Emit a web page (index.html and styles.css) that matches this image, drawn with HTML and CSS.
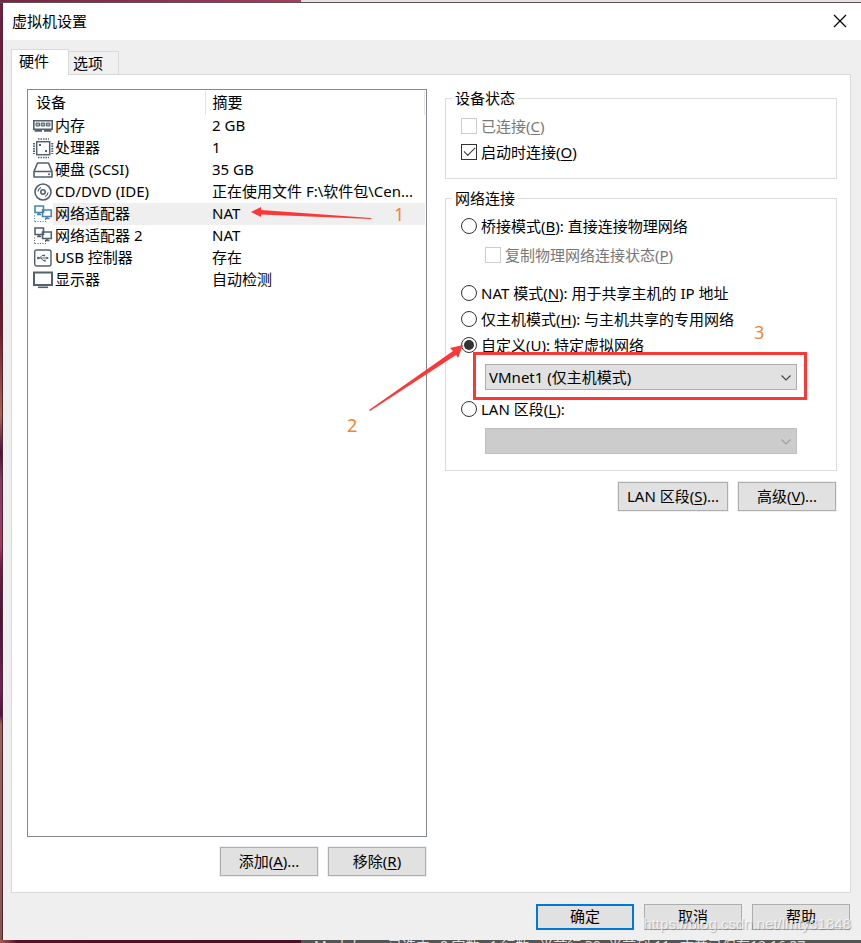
FILE: index.html
```html
<!DOCTYPE html>
<html lang="zh-CN">
<head>
<meta charset="utf-8">
<meta name="viewport" content="width=device-width, initial-scale=1">
<title>虚拟机设置</title>
<link rel="stylesheet" href="styles.css">
</head>
<body>
<div class="desktop-top"></div>
<div class="desktop">
  <div class="wallpaper"></div>
  <main class="dialog">
    <header class="titlebar">
      <h1>虚拟机设置</h1>
      <button class="close" type="button" aria-label="关闭">
        <svg width="14" height="14" viewBox="0 0 14 14"><path d="M1 1L13 13M13 1L1 13" fill="none" stroke="#000" stroke-width="1.2"/></svg>
      </button>
    </header>
    <div class="tabs" role="tablist">
      <button class="tab active" type="button" role="tab" aria-selected="true">硬件</button>
      <button class="tab" type="button" role="tab" aria-selected="false">选项</button>
    </div>
    <div class="panel">
      <section class="devices">
        <div class="list">
          <table>
            <thead><tr><th class="name">设备</th><th>摘要</th></tr></thead>
            <tbody>
              <tr><td><div class="device"><svg class="icon" viewBox="0 0 20 18"><path d="M.8 3.800H19.200V12.200H.8Z" fill="#fff" stroke="currentColor" stroke-width="1.600"/><path d="M3 6H6.500V9H3ZM8.200 6H11.700V9H8.200ZM13.400 6H16.900V9H13.400Z" fill="#aab3ba" stroke="currentColor"/><path d="M1.500 13.800H9M11 13.800H18.500" stroke="currentColor" stroke-width="2"/></svg><span>内存</span></div></td><td>2 GB</td></tr>
              <tr><td><div class="device"><svg class="icon" viewBox="0 0 20 18"><rect x="3.700" y="2.700" width="13" height="13" fill="#fff" stroke="currentColor" stroke-width="1.500"/><path d="M5 0H16M5 18.500H16" stroke="currentColor" stroke-width="1.600" stroke-dasharray="1.500 1"/><path d="M1 4V15M19.300 4V15" stroke="currentColor" stroke-width="2" stroke-dasharray="1.500 1"/><path d="M6 5h2v2H6zM12 11h2v2h-2z" fill="currentColor"/></svg><span>处理器</span></div></td><td>1</td></tr>
              <tr><td><div class="device"><svg class="icon" viewBox="0 0 20 18"><path d="M4.500 2H15.500L19 10.500V16H1V10.500ZM1 10.500H19" fill="#fff" stroke="currentColor" stroke-width="1.600" stroke-linejoin="round"/><circle cx="16" cy="13.300" r="1" fill="currentColor"/></svg><span>硬盘 (SCSI)</span></div></td><td>35 GB</td></tr>
              <tr><td><div class="device"><svg class="icon" viewBox="0 0 20 18"><circle cx="10" cy="9" r="8" fill="#fff" stroke="currentColor" stroke-width="1.600"/><circle cx="10" cy="9" r="2.200" fill="none" stroke="currentColor" stroke-width="1.600"/><path d="M5 8.500A5 5 0 0 1 8 4.500M15 9.500A5 5 0 0 1 12 13.500" fill="none" stroke="currentColor" stroke-width="1.300"/></svg><span>CD/DVD (IDE)</span></div></td><td>正在使用文件 F:\软件包\Cen...</td></tr>
              <tr class="selected"><td><div class="device"><svg class="icon" viewBox="0 0 20 18"><path d="M2 1H10.500V7.500H2ZM4 9.500H8M6 7.500V9.500M9.500 5H18.300V11.500H9.500ZM12 13.500H16.500M14 11.500V13.500" fill="#fff" stroke="currentColor" stroke-width="1.600"/><path d="M1.500 10.500V17M2 16.500H13M12.500 14V17" fill="none" stroke="currentColor" stroke-dasharray="1 1.500"/></svg><span>网络适配器</span></div></td><td>NAT</td></tr>
              <tr><td><div class="device"><svg class="icon" viewBox="0 0 20 18"><path d="M2 1H10.500V7.500H2ZM4 9.500H8M6 7.500V9.500M9.500 5H18.300V11.500H9.500ZM12 13.500H16.500M14 11.500V13.500" fill="#fff" stroke="currentColor" stroke-width="1.600"/><path d="M1.500 10.500V17M2 16.500H13M12.500 14V17" fill="none" stroke="currentColor" stroke-dasharray="1 1.500"/></svg><span>网络适配器 2</span></div></td><td>NAT</td></tr>
              <tr><td><div class="device"><svg class="icon" viewBox="0 0 20 18"><rect x="1.700" y="1" width="16.300" height="16" rx="2" fill="#fff" stroke="currentColor" stroke-width="1.400"/><path d="M4 9H15M6.500 9L9 6.500H11M8 9L10 11.500H12" fill="none" stroke="currentColor" stroke-width="1"/><circle cx="5.300" cy="9" r="1.300" fill="currentColor"/><path d="M13.500 7.400L16 9L13.500 10.600Z" fill="currentColor"/><circle cx="11.300" cy="6.500" r=".9" fill="currentColor"/><path d="M11 10.700h1.800v1.800H11z" fill="currentColor"/></svg><span>USB 控制器</span></div></td><td>存在</td></tr>
              <tr><td><div class="device"><svg class="icon" viewBox="0 0 20 18"><rect x="1" y="1.500" width="18" height="12.500" fill="#fff" stroke="currentColor" stroke-width="2"/><path d="M5 16.300H15" stroke="currentColor" stroke-width="1.600"/></svg><span>显示器</span></div></td><td>自动检测</td></tr>
            </tbody>
          </table>
        </div>
        <div class="actions">
          <button class="btn" type="button">添加(<u>A</u>)...</button>
          <button class="btn" type="button">移除(<u>R</u>)</button>
        </div>
      </section>
      <section class="settings">
        <fieldset>
          <legend>设备状态</legend>
          <label class="option disabled"><input type="checkbox" disabled><span>已连接(<u>C</u>)</span></label>
          <label class="option"><input type="checkbox" checked><span>启动时连接(<u>O</u>)</span></label>
        </fieldset>
        <fieldset class="network">
          <legend>网络连接</legend>
          <label class="option"><input type="radio" name="mode"><span>桥接模式(<u>B</u>): 直接连接物理网络</span></label>
          <label class="option nested disabled"><input type="checkbox" disabled><span>复制物理网络连接状态(<u>P</u>)</span></label>
          <label class="option"><input type="radio" name="mode"><span>NAT 模式(<u>N</u>): 用于共享主机的 IP 地址</span></label>
          <label class="option"><input type="radio" name="mode"><span>仅主机模式(<u>H</u>): 与主机共享的专用网络</span></label>
          <label class="option"><input type="radio" name="mode" checked><span>自定义(<u>U</u>): 特定虚拟网络</span></label>
          <div class="combo marked">
            <select aria-label="特定虚拟网络"><option>VMnet1 (仅主机模式)</option></select>
            <svg class="chevron" width="10" height="6" viewBox="0 0 10 6"><path d="M.5 .5L5 5L9.500 .5" fill="none" stroke="currentColor" stroke-width="1.200"/></svg>
          </div>
          <label class="option"><input type="radio" name="mode"><span>LAN 区段(<u>L</u>):</span></label>
          <div class="combo off">
            <select aria-label="LAN 区段" disabled><option></option></select>
            <svg class="chevron" width="10" height="6" viewBox="0 0 10 6"><path d="M.5 .5L5 5L9.500 .5" fill="none" stroke="currentColor" stroke-width="1.200"/></svg>
          </div>
        </fieldset>
        <div class="actions">
          <button class="btn wide" type="button">LAN 区段(<u>S</u>)...</button>
          <button class="btn" type="button">高级(<u>V</u>)...</button>
        </div>
      </section>
    </div>
    <footer>
      <button class="btn primary" type="button">确定</button>
      <button class="btn" type="button">取消</button>
      <button class="btn" type="button">帮助</button>
    </footer>
  </main>
</div>
<div class="statusbar"><span>Markdown 已选中</span><span>8 字数</span><span>1 行数</span><span>当前行 39, 当前列 11</span><span>文章已保存12:16:37</span></div>
<svg class="arrows" width="861" height="943" viewBox="0 0 861 943" aria-hidden="true">
  <path d="M251 212L261 207V210L371 218V219L261 214.500V217Z" fill="#fb3838"/>
  <path d="M463 345L450 348L453 351L369 410L370 411L456 355L458 358Z" fill="#fb3838"/>
</svg>
<span class="step one">1</span>
<span class="step two">2</span>
<span class="step three">3</span>
<span class="watermark">https://blog.csdn.net/lmty31848</span>
</body>
</html>
```
FILE: styles.css
```css
* { box-sizing: border-box; }
body {
  margin: 0;
  position: relative;
  min-height: 100vh;
  display: flex;
  flex-direction: column;
  overflow-x: hidden;
  background: #efefef;
  color: #000;
  font: 15px/20px "Noto Sans", "Noto Sans CJK SC", sans-serif;
}
button, select { font: inherit; color: inherit; }
u { text-underline-offset: 2px; text-decoration-thickness: 1px; text-decoration-skip-ink: none; }
.desktop-top {
  height: 3px;
  background: linear-gradient(90deg, #7a2345, #a83c5b 35%, #e3e3e3 35%);
  border-bottom: 1px solid #5e5156;
}
.desktop { flex: 1; display: flex; }
.wallpaper {
  width: 3px;
  border-right: 1px solid #4a2b35;
  background: linear-gradient(#7a1d42, #660d35 30%, #7a1928 35%, #b06050 44%, #50103c 48%, #8b3865 51%, #a83760 58%, #761744 60%, #501038 66%, #781c58 73%, #591044 76%, #a16056 77%, #8c5350);
}
.dialog { flex: 1; min-width: 0; display: flex; flex-direction: column; }
.titlebar {
  height: 37px;
  padding: 0 14px 2px 9px;
  display: flex;
  align-items: center;
  justify-content: space-between;
  background: #fff;
}
h1 { margin: 0; font-size: 15px; font-weight: 400; }
.close { padding: 0; border: 0; background: none; display: flex; }
.tabs { display: flex; align-items: flex-end; padding: 9px 8px 0; }
.tab {
  height: 23px;
  width: 50px;
  padding: 0 0 0 4px;
  text-align: left;
  border: 1px solid #d9d9d9;
  border-width: 1px 1px 0 0;
  background: #f0f0f0;
}
.tab.active {
  width: 58px;
  height: 26px;
  margin-bottom: -1px;
  padding: 0 0 3px 7px;
  border-left-width: 1px;
  background: #fff;
  position: relative;
}
.panel {
  flex: 1;
  margin: 0 10px 0 8px;
  padding: 14px 13px 16px 15px;
  display: grid;
  grid-template-columns: 400fr 392fr;
  gap: 18px;
  border: 1px solid #d9d9d9;
  background: #fff;
}
.devices { display: flex; flex-direction: column; gap: 10px; min-width: 0; }
.list { flex: 1; border: 1px solid #828790; padding: 1px; }
table { width: 100%; table-layout: fixed; border-collapse: collapse; }
th, td { padding: 0 0 2px 7px; height: 22px; line-height: 20px; font-weight: 400; text-align: left; white-space: nowrap; }
th { height: 24px; line-height: 22px; border-right: 1px solid #e5e5e5; }
th.name { width: 176px; }
td:first-child { padding: 0 0 0 4px; }
.device { display: flex; align-items: center; height: 22px; }
.device span { flex: 1; padding-left: 2px; height: 22px; }
.icon { width: 20px; height: 18px; color: #52626f; overflow: visible; }
.selected td:last-child, .selected .device span { background: #efefef; }
.selected .icon { color: #4784ac; }
.actions { display: flex; justify-content: flex-end; gap: 10px; padding-right: 1px; }
.btn {
  width: 98px;
  height: 29px;
  padding: 0 0 2px;
  border: 1px solid #adadad;
  background: #e1e1e1;
  box-shadow: 0 0 0 1px #f0f0f0;
}
.btn.wide { width: 110px; }
.btn.primary { border: 2px solid #0078d7; }
fieldset { min-width: 0; margin: 0 0 10px; padding: 6px 39px 13px 15px; border: 1px solid #dcdcdc; }
legend { margin-left: -9px; padding: 0 3px; line-height: 18px; }
.network { padding-bottom: 16px; margin-bottom: 11px; }
.option { display: flex; align-items: center; gap: 4px; height: 26px; white-space: nowrap; }
.option.nested { margin: 3px 0 12px 24px; }
.disabled { color: #787878; }
.option input {
  appearance: none;
  flex: none;
  width: 16px;
  height: 16px;
  margin: 0;
  display: grid;
  place-items: center;
  border: 1px solid #333;
  background: #fff;
}
.option input:disabled { border-color: #ccc; }
.option input[type="radio"] { border-radius: 50%; }
.option input[type="radio"]:checked::before { content: ""; width: 10px; height: 10px; border-radius: 50%; background: #333; }
.option input[type="checkbox"]:checked::before {
  content: "";
  width: 10px;
  height: 5px;
  margin-bottom: 4px;
  border: solid #333;
  border-width: 0 0 1px 1px;
  transform: rotate(-45deg);
}
.combo { position: relative; height: 26px; margin: 6px 0 6px 24px; }
.combo.off { margin-bottom: 0; }
.combo select {
  display: block;
  appearance: none;
  width: 100%;
  height: 26px;
  padding: 0 24px 0 3px;
  border: 1px solid #adadad;
  border-radius: 0;
  background: #e1e1e1;
}
.combo.off select { background: #ccc; border-color: #bfbfbf; opacity: 1; }
.chevron { position: absolute; right: 6px; top: 11px; color: #444; pointer-events: none; }
.off .chevron { color: #a0a0a0; }
.marked::after {
  content: "";
  position: absolute;
  inset: -12px -10px -10px -12px;
  border: 3px solid #fb3838;
  pointer-events: none;
}
footer { display: flex; justify-content: flex-end; gap: 10px; padding: 11px 11px 10px; }
footer .btn { height: 26px; line-height: 20px; box-shadow: none; }
.statusbar {
  height: 3px;
  padding-left: 314px;
  display: flex;
  gap: 10px;
  overflow: hidden;
  white-space: nowrap;
  background: linear-gradient(90deg, #a16056, #551027 2%, #4a1028 35%, #555 35%);
  color: #ddd;
  font-size: 14px;
  line-height: 12px;
}
.arrows { position: absolute; left: 0; top: 0; pointer-events: none; }
.step { position: absolute; color: #f58339; font-size: 18px; line-height: 20px; }
.one { left: 394px; top: 204px; }
.two { left: 347px; top: 415px; }
.three { left: 754px; top: 322px; }
.watermark {
  position: absolute;
  right: 10px;
  bottom: 9px;
  color: rgba(255, 255, 255, 0.7);
  font: 15px/20px "Liberation Sans", sans-serif;
  text-shadow: 1px 1px 1px rgba(0, 0, 0, 0.25);
  pointer-events: none;
}
```
